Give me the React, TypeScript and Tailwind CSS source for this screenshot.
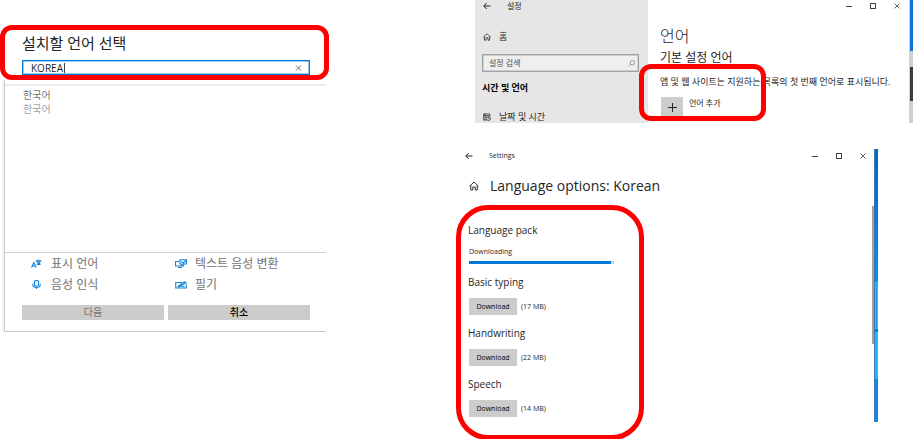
import type { ReactNode } from "react";

type IconProps = { className?: string };

type Feature = {
  label: string;
  icon: ReactNode;
};

type Pack = {
  name: string;
  size: string;
};

const BackIcon = ({ className }: IconProps) => (
  <svg viewBox="0 0 16 16" fill="none" stroke="currentColor" strokeWidth="2" className={className} aria-hidden>
    <path d="M15 8H1.5M7.5 2L1.5 8l6 6" />
  </svg>
);

const HomeIcon = ({ className }: IconProps) => (
  <svg viewBox="0 0 20 20" fill="none" stroke="currentColor" strokeWidth="1.9" className={className} aria-hidden>
    <path d="M1 10.5L10 2l9 8.5M3.5 8.5V18h4v-6h5v6h4V8.500" />
  </svg>
);

const SearchIcon = ({ className }: IconProps) => (
  <svg viewBox="0 0 16 16" fill="none" stroke="currentColor" strokeWidth="1.5" className={className} aria-hidden>
    <circle cx="10" cy="6" r="5" />
    <path d="M6.500 9.500L1 15" />
  </svg>
);

const CloseIcon = ({ className }: IconProps) => (
  <svg viewBox="0 0 12 12" fill="none" stroke="currentColor" strokeWidth="1.6" className={className} aria-hidden>
    <path d="M1 1l10 10M11 1L1 11" />
  </svg>
);

const DateTimeIcon = ({ className }: IconProps) => (
  <svg viewBox="0 0 18 18" fill="none" stroke="currentColor" strokeWidth="1.6" className={className} aria-hidden>
    <path d="M8 16H1.500V2h14v5M1.500 5.500h14M4.500 2v14M4.500 9h4" />
    <circle cx="12.500" cy="12.500" r="4.500" />
    <path d="M12.500 9.500v3.500H15" />
  </svg>
);

const DisplayLanguageIcon = () => (
  <svg viewBox="0 0 24 20" fill="none" stroke="currentColor" strokeWidth="2.600" className="h-[9px] w-[11px]" aria-hidden>
    <path d="M1 19L6 8l5 11M3 15.500h6" />
    <path d="M10 4h13M17 1v3M12.500 12c4-1 7-4 8-8M13 5c1.500 4 4 6 8 7" />
  </svg>
);

const TextToSpeechIcon = () => (
  <svg viewBox="0 0 24 18" fill="none" stroke="currentColor" strokeWidth="2.200" className="h-[9px] w-3" aria-hidden>
    <path d="M9 5H1v9h16v-2M6 17h8" />
    <path d="M10 1.500h13v8.500h-6l-4 3v-3h-3zM13 5l3.500 3L22 3" />
  </svg>
);

const MicIcon = () => (
  <svg viewBox="0 0 24 22" fill="none" stroke="currentColor" strokeWidth="2.600" className="h-[9px] w-[11px]" aria-hidden>
    <rect x="7" y="1.500" width="10" height="13" rx="3" />
    <path d="M3 9v3c0 4 3 6 9 6s9-2 9-6V9M12 18v4" />
  </svg>
);

const HandwritingIcon = () => (
  <svg viewBox="0 0 24 16" fill="none" stroke="currentColor" strokeWidth="2.200" className="h-2 w-3" aria-hidden>
    <path d="M14 3H1.500v11h21V6M6 11L19 1.500l3 2L9 11.500H5M13 11h6" />
  </svg>
);

const features: Feature[] = [
  { label: "표시 언어", icon: <DisplayLanguageIcon /> },
  { label: "텍스트 음성 변환", icon: <TextToSpeechIcon /> },
  { label: "음성 인식", icon: <MicIcon /> },
  { label: "필기", icon: <HandwritingIcon /> },
];

const packs: Pack[] = [
  { name: "Basic typing", size: "(17 MB)" },
  { name: "Handwriting", size: "(22 MB)" },
  { name: "Speech", size: "(14 MB)" },
];

function WindowButtons() {
  return (
    <div className="flex h-3 items-center gap-[18px] text-neutral-700">
      <button type="button" aria-label="Minimize" className="flex h-1.5 w-1.5 items-center">
        <span className="h-px w-full bg-current" />
      </button>
      <button type="button" aria-label="Maximize" className="h-1.5 w-1.5 border border-current" />
      <button type="button" aria-label="Close">
        <CloseIcon className="h-1.5 w-1.5" />
      </button>
    </div>
  );
}

function InstallDialog() {
  return (
    <section className="pt-[25px]">
      <div className="rounded-xl border-[5px] border-[#ff0000] pr-3.5 pl-[17px]">
        <h2 className="text-[15px] leading-[26px] text-neutral-800">
          <label htmlFor="lang">설치할 언어 선택</label>
        </h2>
        <div className="relative mt-1 flex h-[15px] items-center border border-[#0078d7] ring-1 ring-[#0078d7]/40 ring-inset">
          <input
            id="lang"
            type="text"
            defaultValue="KOREA"
            className="h-full w-full min-w-0 bg-transparent pl-2 text-[10px] leading-3 text-neutral-800 outline-none"
          />
          <span className="absolute left-[41px] h-[10px] w-px bg-neutral-700" />
          <button type="button" aria-label="지우기" className="mr-[7px] text-neutral-600">
            <CloseIcon className="h-[6px] w-[7px]" />
          </button>
        </div>
      </div>

      <div className="mr-[3px] ml-0.5 border-l-2 border-neutral-100">
        <div className="border-b border-l border-[#c8c8c8] pt-1">
          <div className="h-0.5 bg-[#ececec]" />
          <ul className="min-h-[166px] pt-0.5 pl-[18px] text-[10px] leading-[14px]">
            <li className="text-neutral-500">한국어</li>
            <li className="text-neutral-400">한국어</li>
          </ul>
          <div className="border-t border-[#d4d4d4] pr-4 pb-[11px] pl-[17px]">
            <ul className="grid grid-cols-2 text-[12px] leading-[21px] text-neutral-500">
              {features.map((f) => (
                <li key={f.label} className="flex items-center gap-2 pl-[9px]">
                  <span className="w-3 text-[#1683d8]">{f.icon}</span>
                  {f.label}
                </li>
              ))}
            </ul>
            <div className="mt-2.5 grid grid-cols-2 gap-1 text-[10px] leading-[15px]">
              <button type="button" disabled className="bg-[#cccccc] text-neutral-500">
                다음
              </button>
              <button type="button" className="bg-[#cccccc] font-medium text-black">
                취소
              </button>
            </div>
          </div>
        </div>
      </div>
    </section>
  );
}

function LanguageSettings() {
  return (
    <section className="relative ml-[19px] flex h-[123px] overflow-hidden text-[9px] leading-3 text-neutral-800">
      <aside className="w-[173px] shrink-0 bg-[#e6e6e6] pr-[9px] pl-[7px]">
        <div className="flex h-3 items-center gap-4 pl-px text-[8px]">
          <button type="button" aria-label="뒤로">
            <BackIcon className="h-2 w-2" />
          </button>
          설정
        </div>
        <a href="#home" className="mt-[19px] flex items-center gap-2 pl-px">
          <HomeIcon className="h-2 w-2" />
          홈
        </a>
        <div className="mt-[11px] flex h-[18px] items-center border border-neutral-400 bg-[#efefef] ring-1 ring-neutral-400/40 ring-inset">
          <input
            type="search"
            aria-label="설정 검색"
            placeholder="설정 검색"
            className="w-full min-w-0 bg-transparent pl-1.5 text-[8px] leading-3 outline-none placeholder:text-neutral-600"
          />
          <SearchIcon className="mr-[3px] h-[7px] w-[7px] shrink-0 text-neutral-500" />
        </div>
        <h3 className="mt-2.5 font-bold text-black">시간 및 언어</h3>
        <a href="#time" className="mt-[17px] flex items-center gap-2 pl-px">
          <DateTimeIcon className="h-2 w-2" />
          날짜 및 시간
        </a>
      </aside>

      <div className="min-w-0 flex-1 pl-3">
        <div className="flex justify-end pr-[9px]">
          <WindowButtons />
        </div>
        <h1 className="mt-3 text-[16px] leading-6 font-light">언어</h1>
        <h2 className="mt-0.5 text-[12px] leading-4">기본 설정 언어</h2>
        <p className="mt-2.5 whitespace-nowrap">앱 및 웹 사이트는 지원하는 목록의 첫 번째 언어로 표시됩니다.</p>
        <div className="mt-[9px] flex gap-1.5 pl-px">
          <button
            id="add-language"
            type="button"
            aria-label="언어 추가"
            className="flex h-[21px] w-[22px] items-center justify-center bg-[#cccccc]"
          >
            <svg viewBox="0 0 9 9" stroke="currentColor" className="h-[9px] w-[9px]" aria-hidden>
              <path d="M4.500 0v9M0 4.500h9" />
            </svg>
          </button>
          <label htmlFor="add-language" className="text-[8px]">
            언어 추가
          </label>
        </div>
      </div>

      <div className="flex w-1 shrink-0 flex-col border-l border-neutral-300">
        <div className="h-[51px] bg-[#0a73dc]" />
        <div className="h-4 bg-[#cfcfcf]" />
        <div className="h-[34px] bg-[#3a3a3a]" />
        <div className="flex-1 bg-[#cfcfcf]" />
      </div>

      <div className="pointer-events-none absolute top-16 left-[164px] h-[57px] w-[127px] rounded-xl border-[5px] border-[#ff0000]" />
    </section>
  );
}

function LanguageOptions() {
  return (
    <section className="mt-[26px] mr-[35px] flex text-neutral-800">
      <div className="min-w-0 flex-1">
        <div className="flex items-center justify-between pt-px pr-1.5 pl-[9px]">
          <div className="flex items-center gap-4 text-[7px] leading-3">
            <button type="button" aria-label="Back">
              <BackIcon className="h-2 w-2" />
            </button>
            Settings
          </div>
          <WindowButtons />
        </div>
        <div className="mt-3.5 flex items-center gap-[11px] pl-[13px]">
          <HomeIcon className="h-2.5 w-2.5" />
          <h1 className="text-[14px] leading-5">Language options: Korean</h1>
        </div>

        <div className="mt-[9px] w-[188px] rounded-[32px] border-[5px] border-[#ff0000] px-[7px] pt-3 pb-[18px]">
          <h2 className="text-[10px] leading-4">Language pack</h2>
          <p className="mt-2 pl-px text-[7px] leading-3">Downloading</p>
          <div className="mt-[3px] mr-[18px] ml-px h-[3px] bg-neutral-300">
            <div className="h-full w-[98%] bg-[#0078d7]" />
          </div>
          <div className="mt-2.5 flex flex-col gap-2.5">
            {packs.map((p) => (
              <div key={p.name}>
                <h2 className="text-[10px] leading-4">{p.name}</h2>
                <div className="mt-2 flex items-center gap-1 pl-px text-[7px] leading-[17px]">
                  <button type="button" className="w-12 bg-[#cccccc] text-black">
                    Download
                  </button>
                  <span>{p.size}</span>
                </div>
              </div>
            ))}
          </div>
        </div>
      </div>

      <div className="mt-[57px] h-[138px] w-0.5 shrink-0 bg-neutral-400" />
      <div className="mb-[18px] flex w-1 shrink-0 flex-col border-l border-[#3b78b5]">
        <div className="h-[133px] bg-linear-to-b from-[#0066cc] to-[#0091ff]" />
        <div className="h-[47px] border border-[#16c8f5] bg-[#1a9ff0]" />
        <div className="h-[3px] bg-[#0078d7]" />
        <div className="h-[47px] border border-[#16c8f5] bg-[#1aaef0]" />
        <div className="flex-1 bg-[#0a8cee]" />
      </div>
    </section>
  );
}

export default function App() {
  return (
    <main className="grid grid-cols-[329fr_457fr] gap-x-[127px] bg-white font-['Open_Sans','Noto_Sans_CJK_KR',sans-serif]">
      <InstallDialog />
      <div className="min-w-0">
        <LanguageSettings />
        <LanguageOptions />
      </div>
    </main>
  );
}
